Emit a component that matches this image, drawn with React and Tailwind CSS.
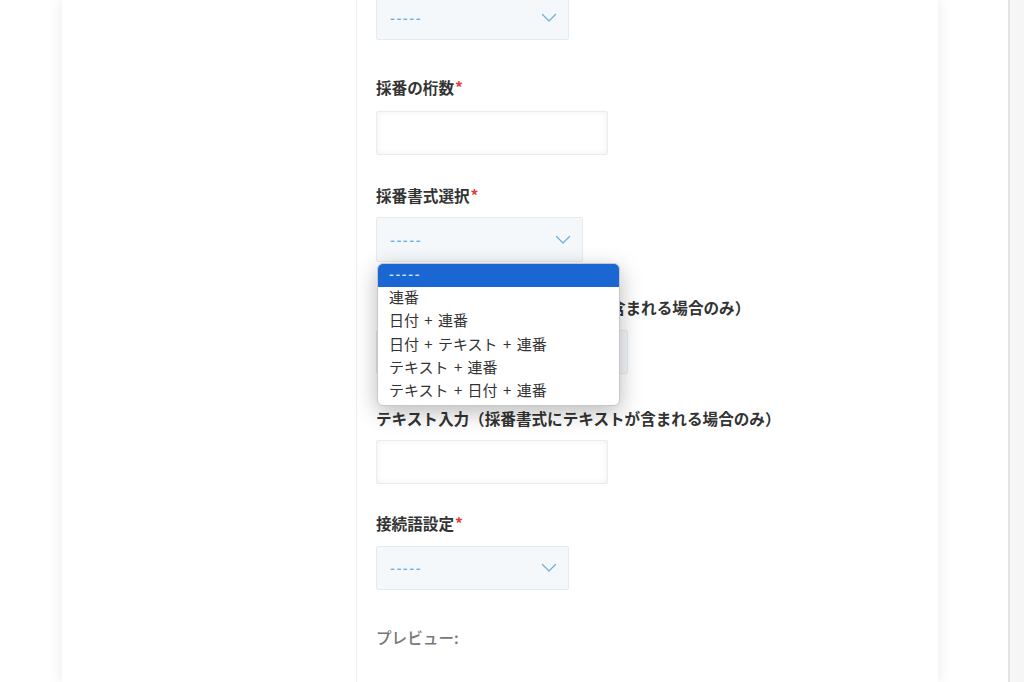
const options = ['-----', '連番', '日付 + 連番', '日付 + テキスト + 連番', 'テキスト + 連番', 'テキスト + 日付 + 連番']

function Label({ children, required, className = '' }) {
  return (
    <div className={`h-6 leading-6 text-[15.6px] font-bold text-[#333] ${className}`}>
      {children}
      {required && <span className="text-[#e53935] ml-[1px]">*</span>}
    </div>
  )
}

function Chevron() {
  return (
    <svg width="16" height="10" viewBox="0 0 16 10" fill="none" className="text-[#6aafe0]">
      <polyline points="1.5,1.5 8,8 14.5,1.5" stroke="currentColor" strokeWidth="1.2" strokeLinecap="round" strokeLinejoin="round" />
    </svg>
  )
}

function SelectBox({ width, height = 'h-[44px]', children }) {
  return (
    <div className={`relative ${width} ${height}`}>
      <div className="h-full w-full flex items-center justify-between pl-[13px] pr-[11px] bg-[#f5f8fb] border border-[#e7ebef] rounded-[2px]">
        <span className="text-[13px] font-bold tracking-[1.6px] text-[#6aaee3]">-----</span>
        <Chevron />
      </div>
      {children}
    </div>
  )
}

function TextInput({ width }) {
  return (
    <div className={`${width} h-[44px] bg-white border border-[#ececec] rounded-[2px] shadow-[inset_0_0_6px_rgba(0,0,0,0.06)]`} />
  )
}

export default function App() {
  return (
    <div className="h-[682px] w-full flex overflow-hidden bg-white font-['Noto_Sans_CJK_JP','Noto_Sans',sans-serif]">
      <div className="w-[62px] shrink-0" />

      {/* Card */}
      <div className="w-[876px] shrink-0 flex bg-white shadow-[0_0_14px_rgba(0,0,0,0.09)]">
        <div className="w-[294px] shrink-0" />
        <div className="flex-1 border-l border-[#efefef] pl-[19px]">
          <div className="-mt-[4px]">
            <SelectBox width="w-[193px]" />

            <Label required className="mt-[35px]">採番の桁数</Label>
            <div className="mt-[12px]">
              <TextInput width="w-[232px]" />
            </div>

            <Label required className="mt-[28px]">採番書式選択</Label>
            <div className="mt-[10px]">
              <SelectBox width="w-[207px]" height="h-[45px]">
                {/* Open option list */}
                <div className="absolute left-[1px] top-[46px] z-10 w-[243px] pb-[2px] bg-white border border-[#c8c8c8] rounded-[6px] overflow-hidden shadow-[0_6px_22px_rgba(0,0,0,0.28)]">
                  {options.map((o, i) => (
                    <div
                      key={o}
                      className={
                        i === 0
                          ? 'h-[23px] leading-[19px] pl-[11px] text-[13px] font-bold tracking-[1.6px] bg-[#1a66d2] text-[#d6e7ff]'
                          : 'h-[23.3px] leading-[20px] pl-[11px] text-[15px] text-[#333] [word-spacing:2px]'
                      }
                    >
                      {o}
                    </div>
                  ))}
                </div>
              </SelectBox>
            </div>

            <Label className="mt-[33px]">日付書式選択（採番書式に日付が含まれる場合のみ）</Label>
            <div className="mt-[11px]">
              <SelectBox width="w-[252px]" />
            </div>

            <Label className="mt-[32px]">テキスト入力（採番書式にテキストが含まれる場合のみ）</Label>
            <div className="mt-[10px]">
              <TextInput width="w-[232px]" />
            </div>

            <Label required className="mt-[27px]">接続語設定</Label>
            <div className="mt-[11px]">
              <SelectBox width="w-[193px]" />
            </div>

            <div className="mt-[35px] h-6 leading-6 text-[15.6px] font-medium text-[#777]">プレビュー:</div>
          </div>
        </div>
      </div>

      <div className="flex-1" />
      {/* Scrollbar track */}
      <div className="w-[16px] shrink-0 border-l-2 border-[#e4e4e4] bg-[#f6f6f6]" />
    </div>
  )
}
